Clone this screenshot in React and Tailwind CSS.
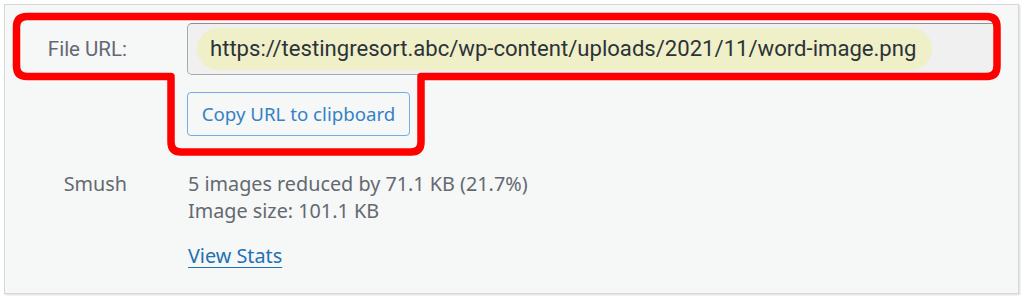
import React from 'react';

export default function App() {
  return (
    <div className="w-[1023px] h-[298px] bg-white pt-[4px] pl-[4px] relative overflow-hidden">
      {/* Attachment details card */}
      <div className="w-[1015px] h-[290px] bg-[#f6f7f7] border border-[#d6d7d9] shadow-[1px_1px_2px_rgba(0,0,0,0.15)] pt-[18px]">
        {/* File URL row */}
        <div className="flex items-center">
          <div className="w-[122px] text-right text-[20.5px] text-[#646970] font-['Roboto',sans-serif]">File URL:</div>
          <div className="ml-[60px] w-[810px] h-[52px] rounded-[5px] bg-[#f0f0f1] border border-[#a7aaad] border-t-[#8c8f94] flex items-center pl-[9px]">
            <span className="h-[42px] flex items-center pl-[13px] pr-[16px] rounded-full bg-[#efefc8] text-[22.1px] text-[#2c3338] font-['Roboto',sans-serif] whitespace-nowrap">
              https://testingresort.abc/wp-content/uploads/2021/11/word-image.png
            </span>
          </div>
        </div>

        {/* Copy button */}
        <div className="flex mt-[17px]">
          <div className="w-[182px]" />
          <button className="h-[44px] w-[223px] rounded-[4px] border border-[#72aee6] bg-[#f6f7f7] text-[#3582c4] text-[18.7px] font-['Noto_Sans',sans-serif] pt-[1px]">
            Copy URL to clipboard
          </button>
        </div>

        {/* Smush row */}
        <div className="flex mt-[34px] font-['Noto_Sans',sans-serif] text-[19.8px] leading-[27px]">
          <div className="w-[122px] text-right text-[#646970]">Smush</div>
          <div className="ml-[61px] text-[#646970]">
            <div>5 images reduced by 71.1 KB (21.7%)</div>
            <div>Image size: 101.1 KB</div>
            <a href="#" className="block mt-[18px] text-[#2271b1] underline underline-offset-[4px] w-fit">View Stats</a>
          </div>
        </div>
      </div>

      {/* Red annotation outline */}
      <svg className="absolute left-0 top-0 pointer-events-none" width="1023" height="298" viewBox="0 0 1023 298">
        <path
          d="M16.5 27 Q16.5 16.5 27 16.5 H987 Q997 16.5 997 27 V66 Q997 76.5 987 76.5 H421 V142 Q421 152 411 152 H181 Q171 152 171 142 V76.5 H27 Q16.5 76.5 16.5 66 Z"
          fill="none"
          stroke="#ff0000"
          strokeWidth="7.5"
          strokeLinejoin="round"
        />
      </svg>
    </div>
  );
}
